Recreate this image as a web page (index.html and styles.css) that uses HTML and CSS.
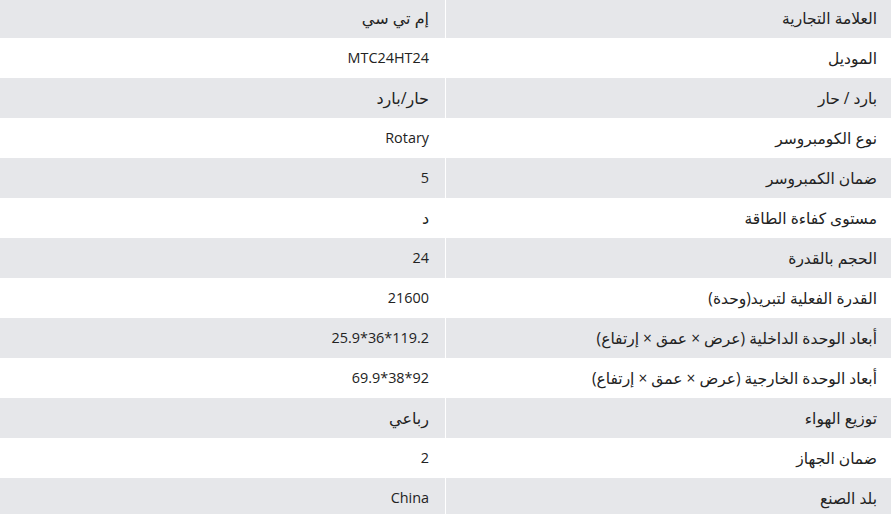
FILE: index.html
```html
<!DOCTYPE html>
<html lang="ar" dir="rtl">
<head>
<meta charset="utf-8">
<link rel="stylesheet" href="styles.css">
</head>
<body>
<table class="specs">
<tbody>
<tr><td class="label">العلامة التجارية</td><td class="value ar">إم تي سي</td></tr>
<tr><td class="label">الموديل</td><td class="value">MTC24HT24</td></tr>
<tr><td class="label">بارد / حار</td><td class="value ar">حار/بارد</td></tr>
<tr><td class="label">نوع الكومبروسر</td><td class="value">Rotary</td></tr>
<tr><td class="label">ضمان الكمبروسر</td><td class="value">5</td></tr>
<tr><td class="label">مستوى كفاءة الطاقة</td><td class="value ar">د</td></tr>
<tr><td class="label">الحجم بالقدرة</td><td class="value">24</td></tr>
<tr><td class="label">القدرة الفعلية لتبريد(وحدة)</td><td class="value">21600</td></tr>
<tr><td class="label">أبعاد الوحدة الداخلية (عرض × عمق × إرتفاع)</td><td class="value">119.2*36*25.9</td></tr>
<tr><td class="label">أبعاد الوحدة الخارجية (عرض × عمق × إرتفاع)</td><td class="value">92*38*69.9</td></tr>
<tr><td class="label">توزيع الهواء</td><td class="value ar">رباعي</td></tr>
<tr><td class="label">ضمان الجهاز</td><td class="value">2</td></tr>
<tr><td class="label">بلد الصنع</td><td class="value">China</td></tr>
</tbody>
</table>
</body>
</html>
```
FILE: styles.css
```css
html, body {
  margin: 0;
  padding: 0;
  background: #ffffff;
}
body {
  font-family: "Open Sans", "Noto Sans", "DejaVu Sans", sans-serif;
  font-size: 14px;
  color: #222222;
  overflow: hidden;
}
.specs {
  width: 100%;
  border-collapse: collapse;
  margin-top: -2px;
}
.specs tr {
  height: 40px;
}
.specs tr:nth-child(odd) {
  background: #e6e7ea;
}
.specs td {
  width: 50%;
  padding: 0 14px;
  text-align: right;
  vertical-align: middle;
  line-height: 20px;
}
.specs td.label {
  border-left: 1px solid #ffffff;
  font-size: 15.5px;
}
.specs td.value {
  padding-right: 16px;
  font-size: 14.4px;
}
.specs td.ar {
  font-size: 16px;
}
```
